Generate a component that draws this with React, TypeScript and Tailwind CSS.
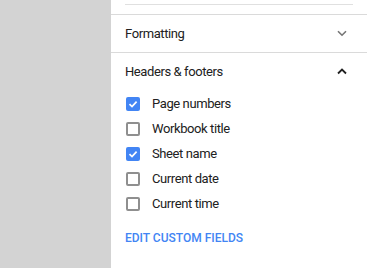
import React from "react";

const Check = ({ checked }: { checked: boolean }) =>
  checked ? (
    <div className="w-[14px] h-[14px] rounded-[2px] bg-[#4285f4] flex items-center justify-center">
      <svg width="10" height="10" viewBox="0 0 10 10">
        <path d="M1.5 5.2 L4 7.6 L8.6 2.6" stroke="#fff" strokeWidth="1.7" fill="none" />
      </svg>
    </div>
  ) : (
    <div className="w-[14px] h-[14px] rounded-[2px] border-2 border-[#8f8f8f] bg-white" />
  );

const items: [string, boolean][] = [
  ["Page numbers", true],
  ["Workbook title", false],
  ["Sheet name", true],
  ["Current date", false],
  ["Current time", false],
];

export default function App() {
  return (
    <div
      className="flex w-[372px] h-[268px] bg-white text-[#212121]"
      style={{ fontFamily: "Roboto, 'Noto Sans', sans-serif" }}
    >
      <div className="w-[111px] shrink-0 bg-[#d3d3d3]" />
      <div className="flex-1 pr-[5px]">
        <div className="pt-[4px] pl-[14px] pr-[14px]">
          <div className="h-px bg-[#e0e0e0]" />
        </div>
        <div className="h-[9px]" />
        <div className="h-px bg-[#dadada]" />
        <div className="h-[37px] flex items-center justify-between pl-[14px] pr-[20px] text-[13px] tracking-[-0.4px]">
          <span>Formatting</span>
          <svg width="10" height="7" viewBox="0 0 10 7">
            <path d="M1 1.2 L5 5.2 L9 1.2" stroke="#757575" strokeWidth="1.6" fill="none" />
          </svg>
        </div>
        <div className="h-px bg-[#dadada]" />
        <div className="h-[37px] flex items-center justify-between pl-[14px] pr-[20px] text-[13px] tracking-[-0.4px]">
          <span>Headers &amp; footers</span>
          <svg width="10" height="7" viewBox="0 0 10 7">
            <path d="M1 5.5 L5 1.5 L9 5.5" stroke="#212121" strokeWidth="1.8" fill="none" />
          </svg>
        </div>
        <div className="flex flex-col pl-[15px] pt-[1px]">
          {items.map(([label, c]) => (
            <div key={label} className="h-[25px] flex items-center gap-[12px] text-[13px] tracking-[-0.4px]">
              <Check checked={c} />
              <span>{label}</span>
            </div>
          ))}
        </div>
        <div className="pl-[14px] pt-[13px] text-[12px] font-medium text-[#4285f4]">
          EDIT CUSTOM FIELDS
        </div>
      </div>
    </div>
  );
}
